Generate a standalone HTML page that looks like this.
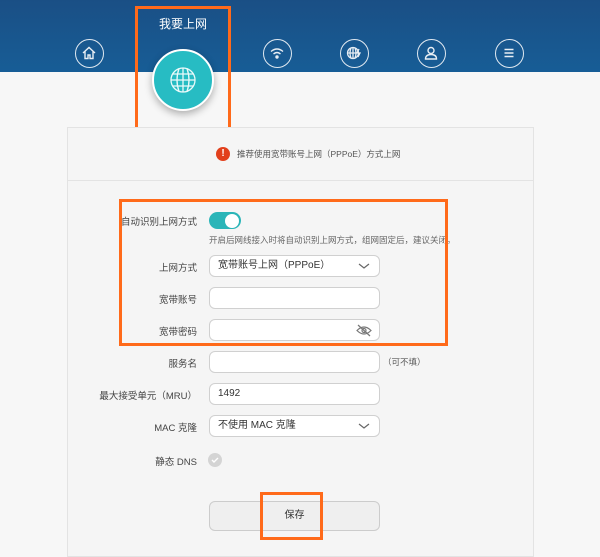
<!DOCTYPE html><html><head><meta charset="utf-8"><style>
*{margin:0;padding:0;box-sizing:border-box}
body{width:600px;height:543px;overflow:hidden;background:#f7f7f7;font-family:"Liberation Sans","Noto Sans CJK SC",sans-serif;color:#333;position:relative}
.hd{position:absolute;left:0;top:0;width:600px;height:72px;background:linear-gradient(#1a4f85,#175d96)}
.ic{position:absolute;width:29px;height:29px;border:1.5px solid #dfe8f0;border-radius:50%;top:39px}
.ic svg{position:absolute;left:0;top:0}
.abs{position:absolute}
.card{position:absolute;left:67px;top:127px;width:467px;height:430px;background:#f5f5f5;border:1px solid #e3e3e3}
.lbl{position:absolute;right:403px;font-size:9.5px;line-height:22px;height:22px;color:#444;text-align:right;white-space:nowrap;margin-top:3px}
.inp{position:absolute;left:209px;width:171px;height:22px;border:1px solid #d0d0d0;border-radius:6px;background:#fff;font-size:10px;padding-left:8px;line-height:20px;color:#333}
.ob{position:absolute;border:3px solid #ff6a1a}
.chev{position:absolute;right:9px;top:5px}
</style></head><body>
<div class="hd"></div>
<div class="abs" style="left:148px;top:15px;width:70px;text-align:center;color:#fff;font-size:12px">我要上网</div>
<div class="ic" style="left:75px"><svg width="26" height="26" viewBox="0 0 26 26" fill="none" stroke="#e8eef4" stroke-width="1.4"><path d="M7 13L13 7.5 19 13M9 11.5V18.5H12V15H14V18.5H17V11.5"/></svg></div>
<div class="ic" style="left:263px"><svg width="26" height="26" viewBox="0 0 26 26" fill="none" stroke="#e8eef4" stroke-width="1.4"><path d="M7 11.5Q13 6.5 19 11.5M9.5 14Q13 11 16.5 14"/><circle cx="13" cy="17" r="1" fill="#e8eef4"/></svg></div>
<div class="ic" style="left:340px"><svg width="26" height="26" viewBox="0 0 26 26" fill="none" stroke="#e8eef4" stroke-width="1.3"><circle cx="12" cy="13" r="5.5"/><path d="M12 7.5v11M6.5 13h11M10 8q-2 5 0 10M14 8q2 5 0 10M18 9l-2 4h3l-2 4"/></svg></div>
<div class="ic" style="left:417px"><svg width="26" height="26" viewBox="0 0 26 26" fill="none" stroke="#e8eef4" stroke-width="1.4"><circle cx="13" cy="10.5" r="3"/><path d="M7.5 19q0-4.5 5.5-4.5t5.5 4.5z"/></svg></div>
<div class="ic" style="left:495px"><svg width="26" height="26" viewBox="0 0 26 26" fill="none" stroke="#e8eef4" stroke-width="1.4"><path d="M8.5 9.5h9M8.5 13h9M8.5 16.5h9"/></svg></div>
<div class="abs" style="left:152px;top:49px;width:62px;height:62px;border-radius:50%;background:#27bcc3;border:2px solid #fff;box-shadow:0 3px 8px rgba(0,0,0,.3)"><svg width="58" height="58" viewBox="0 0 58 58" fill="none" stroke="#eafafa" stroke-width="1.3"><circle cx="29" cy="29" r="12"/><path d="M29 17v24M17 29h24M19 23h20M19 35h20M25 17.5q-4 11.5 0 23M33 17.5q4 11.5 0 23"/></svg></div>
<div class="ob" style="left:135px;top:6px;width:96px;height:125px"></div>
<div class="card"></div>
<div class="abs" style="left:68px;top:180px;width:465px;height:1px;background:#e3e3e3"></div>
<div class="abs" style="left:216px;top:147px;width:14px;height:14px;border-radius:50%;background:#e2401c;color:#fff;font-size:10px;font-weight:bold;text-align:center;line-height:14px">!</div>
<div class="abs" style="left:237px;top:148px;font-size:8.5px;color:#555">推荐使用宽带账号上网（PPPoE）方式上网</div>
<div class="lbl" style="top:209px">自动识别上网方式</div>
<div class="abs" style="left:209px;top:212px;width:32px;height:17px;border-radius:9px;background:#2bb5b8"><div class="abs" style="left:16px;top:1.5px;width:14px;height:14px;border-radius:50%;background:#fff"></div></div>
<div class="abs" style="left:209px;top:234px;font-size:8.5px;color:#666">开启后网线接入时将自动识别上网方式，组网固定后，建议关闭。</div>
<div class="lbl" style="top:255px">上网方式</div>
<div class="inp" style="top:255px">宽带账号上网（PPPoE）<svg class="chev" width="12" height="10" viewBox="0 0 12 10" fill="none" stroke="#666" stroke-width="1.2"><path d="M1 3l5 4 5-4"/></svg></div>
<div class="lbl" style="top:287px">宽带账号</div>
<div class="inp" style="top:287px"></div>
<div class="lbl" style="top:319px">宽带密码</div>
<div class="inp" style="top:319px"><svg class="abs" style="right:7px;top:4px" width="16" height="13" viewBox="0 0 16 13" fill="none" stroke="#777" stroke-width="1.2"><path d="M1 6.5q7-7 14 0q-7 7-14 0z"/><circle cx="8" cy="6.5" r="2"/><path d="M2 1l12 11"/></svg></div>
<div class="ob" style="left:119px;top:199px;width:329px;height:147px"></div>
<div class="lbl" style="top:351px">服务名</div>
<div class="inp" style="top:351px"></div>
<div class="abs" style="left:383px;top:356px;font-size:8.5px;color:#555">（可不填）</div>
<div class="lbl" style="top:383px">最大接受单元（MRU）</div>
<div class="inp" style="top:383px">1492</div>
<div class="lbl" style="top:415px">MAC 克隆</div>
<div class="inp" style="top:415px">不使用 MAC 克隆<svg class="chev" width="12" height="10" viewBox="0 0 12 10" fill="none" stroke="#666" stroke-width="1.2"><path d="M1 3l5 4 5-4"/></svg></div>
<div class="lbl" style="top:449px">静态 DNS</div>
<div class="abs" style="left:208px;top:453px;width:14px;height:14px;border-radius:50%;background:#d4d4d4"><svg width="14" height="14" viewBox="0 0 14 14" fill="none" stroke="#fff" stroke-width="1.4"><path d="M4 7l2 2 4-4"/></svg></div>
<div class="abs" style="left:209px;top:501px;width:171px;height:30px;border:1px solid #ccc;border-radius:6px;background:#efefef;text-align:center;line-height:28px;font-size:10px">保存</div>
<div class="ob" style="left:260px;top:492px;width:63px;height:48px"></div>
</body></html>
